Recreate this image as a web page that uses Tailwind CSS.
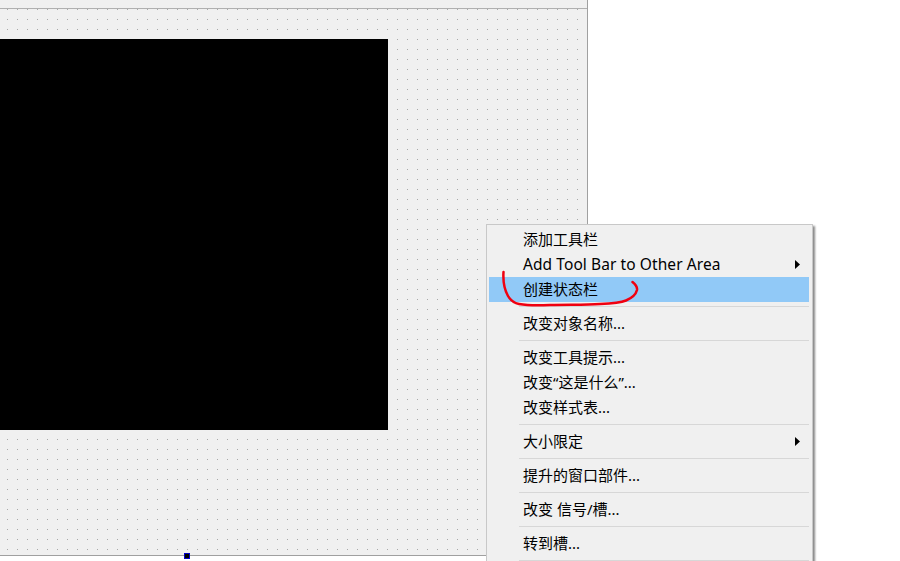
<!doctype html>
<html lang="zh">
<head>
<meta charset="utf-8">
<title>Qt Designer</title>
<script src="https://cdn.jsdelivr.net/npm/@tailwindcss/browser@4"></script>
</head>
<body class="bg-white">
<div class="relative w-[900px] h-[561px] overflow-hidden bg-white">
  <!-- form being edited -->
  <div class="w-[588px] h-[556px] flex flex-col bg-[#f0f0f0] border-r border-b border-[#a0a0a0]">
    <div class="h-[9px] shrink-0 border-b border-[#b0b0b0]"></div>
    <div class="relative grow pt-[30px]">
      <svg class="absolute inset-0 w-full h-full" aria-hidden="true">
        <defs>
          <pattern id="grid" x="7" y="0" width="10" height="10" patternUnits="userSpaceOnUse">
            <rect width="1" height="1" fill="#a8a8a8"></rect>
          </pattern>
        </defs>
        <rect width="100%" height="100%" fill="url(#grid)"></rect>
      </svg>
      <div class="relative w-[388px] h-[391px] bg-black"></div>
    </div>
  </div>
  <!-- selection handle -->
  <div class="absolute left-[184px] top-[553px] w-[6px] h-[6px] bg-black border border-[#0000c8]"></div>

  <!-- context menu -->
  <div class="absolute left-[486px] top-[224px] w-[327px] h-[345px] pt-[2px] pl-[2px] pr-[3px] bg-[#f0f0f0] border border-[#c8c8c8] shadow-[2px_2px_2px_#8a8a8a] text-[15px] text-black font-['Noto_Sans','Noto_Sans_CJK_SC',sans-serif]">
    <div class="h-[25px] pl-[34px] flex items-center">添加工具栏</div>
    <div class="h-[25px] pl-[34px] flex items-center justify-between">
      <span class="text-[15.5px] tracking-[0.08px]">Add Tool Bar to Other Area</span>
      <svg class="w-[5px] h-[9px] mr-[9px]" viewBox="0 0 5 9"><path d="M0 0 L5 4.5 L0 9 Z" fill="#000"></path></svg>
    </div>
    <div class="h-[25px] pl-[34px] flex items-center bg-[#91c9f7]">创建状态栏</div>
    <div class="h-[9px] ml-[30px] pt-[4px]"><div class="h-px bg-[#d7d7d7]"></div></div>
    <div class="h-[25px] pl-[34px] flex items-center">改变对象名称...</div>
    <div class="h-[9px] ml-[30px] pt-[4px]"><div class="h-px bg-[#d7d7d7]"></div></div>
    <div class="h-[25px] pl-[34px] flex items-center">改变工具提示...</div>
    <div class="h-[25px] pl-[34px] flex items-center">改变“这是什么”...</div>
    <div class="h-[25px] pl-[34px] flex items-center">改变样式表...</div>
    <div class="h-[9px] ml-[30px] pt-[4px]"><div class="h-px bg-[#d7d7d7]"></div></div>
    <div class="h-[25px] pl-[34px] flex items-center justify-between">
      <span>大小限定</span>
      <svg class="w-[5px] h-[9px] mr-[9px]" viewBox="0 0 5 9"><path d="M0 0 L5 4.5 L0 9 Z" fill="#000"></path></svg>
    </div>
    <div class="h-[9px] ml-[30px] pt-[4px]"><div class="h-px bg-[#d7d7d7]"></div></div>
    <div class="h-[25px] pl-[34px] flex items-center">提升的窗口部件...</div>
    <div class="h-[9px] ml-[30px] pt-[4px]"><div class="h-px bg-[#d7d7d7]"></div></div>
    <div class="h-[25px] pl-[34px] flex items-center">改变 信号/槽...</div>
    <div class="h-[9px] ml-[30px] pt-[4px]"><div class="h-px bg-[#d7d7d7]"></div></div>
    <div class="h-[25px] pl-[34px] flex items-center">转到槽...</div>
    <div class="h-[9px] ml-[30px] pt-[4px]"><div class="h-px bg-[#d7d7d7]"></div></div>
  </div>

  <!-- red hand-drawn annotation -->
  <svg class="absolute inset-0 w-[900px] h-[561px] pointer-events-none" viewBox="0 0 900 561" fill="none">
    <path d="M503.500 272 C503 280 504 289 508 296 C511 301 514 303 519 304 C530 306 540 305.500 550 305 C570 304.500 585 305 600 304 C612 303.500 620 303 626 300.500 C632 298 636 294 637 290 C637.500 287 635 284 632.500 282" stroke="#f00010" stroke-width="2.500" stroke-linecap="round"></path>
  </svg>
</div>
</body>
</html>
